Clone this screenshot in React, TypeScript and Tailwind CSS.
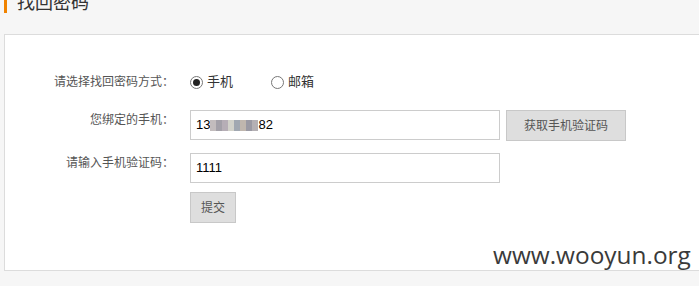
const MOSAIC = [
  "bg-[#c2bcbd]",
  "bg-[#a3a0a8]",
  "bg-[#b6aeb6]",
  "bg-[#d2d2ca]",
  "bg-[#a1a8b1]",
  "bg-[#bfb6ae]",
  "bg-[#9a99a3]",
  "bg-[#b4b0b4]",
];

function Radio({ checked, label }: { checked?: boolean; label: string }) {
  return (
    <label className="flex items-center gap-[4px] text-[13px] text-[#333]">
      <span className="w-[13px] h-[13px] rounded-full border border-[#777] bg-white flex items-center justify-center">
        {checked && <span className="w-[7px] h-[7px] rounded-full bg-[#222]" />}
      </span>
      {label}
    </label>
  );
}

export default function App() {
  return (
    <div className="relative w-[699px] h-[286px] overflow-hidden bg-[#f6f6f6] font-['Liberation_Sans','Noto_Sans_CJK_SC',sans-serif]">
      {/* ================= Title ================= */}
      <div className="h-[34px] flex flex-col">
        <div className="flex items-center -mt-[7px] ml-[4px]">
          <div className="w-[3px] h-[20px] bg-[#f08300]" />
          <h2 className="ml-[10px] text-[18px] leading-[20px] text-[#333]">找回密码</h2>
        </div>
      </div>

      {/* ================= Panel ================= */}
      <div className="ml-[4px] w-[720px] h-[237px] border border-[#dcdcdc] bg-white pt-[37px] text-[12px] text-[#555]">
        {/* method */}
        <div className="flex items-center h-[20px]">
          <div className="w-[169px] text-right">请选择找回密码方式：</div>
          <div className="ml-[16px] flex items-center gap-[38px]">
            <Radio checked label="手机" />
            <Radio label="邮箱" />
          </div>
        </div>

        {/* phone */}
        <div className="flex items-start mt-[18px]">
          <div className="w-[169px] text-right leading-[20px]">您绑定的手机：</div>
          <div className="ml-[16px] w-[310px] h-[30px] border border-[#ccc] flex items-center px-[5px] text-[13px] text-black">
            13
            <span className="inline-flex h-[11px]">
              {MOSAIC.map((c, i) => (
                <span key={i} className={`w-[6px] h-[11px] ${c}`} />
              ))}
            </span>
            82
          </div>
          <button className="ml-[6px] w-[120px] h-[31px] border border-[#c8c8c8] bg-[#dedede] text-[12px] text-[#555]">
            获取手机验证码
          </button>
        </div>

        {/* code */}
        <div className="flex items-start mt-[12px]">
          <div className="w-[169px] text-right leading-[20px]">请输入手机验证码：</div>
          <div className="ml-[16px] w-[310px] h-[30px] border border-[#ccc] flex items-center px-[5px] text-[13px] text-black">
            1111
          </div>
        </div>

        {/* submit */}
        <div className="flex mt-[9px]">
          <button className="ml-[185px] w-[46px] h-[31px] border border-[#c8c8c8] bg-[#dedede] text-[12px] text-[#555]">
            提交
          </button>
        </div>
      </div>

      {/* watermark */}
      <div className="absolute left-[493px] top-[239px] text-[24.4px] leading-[32px] text-[#3a3a3a] font-['Open_Sans',sans-serif]">
        www.wooyun.org
      </div>
    </div>
  );
}
